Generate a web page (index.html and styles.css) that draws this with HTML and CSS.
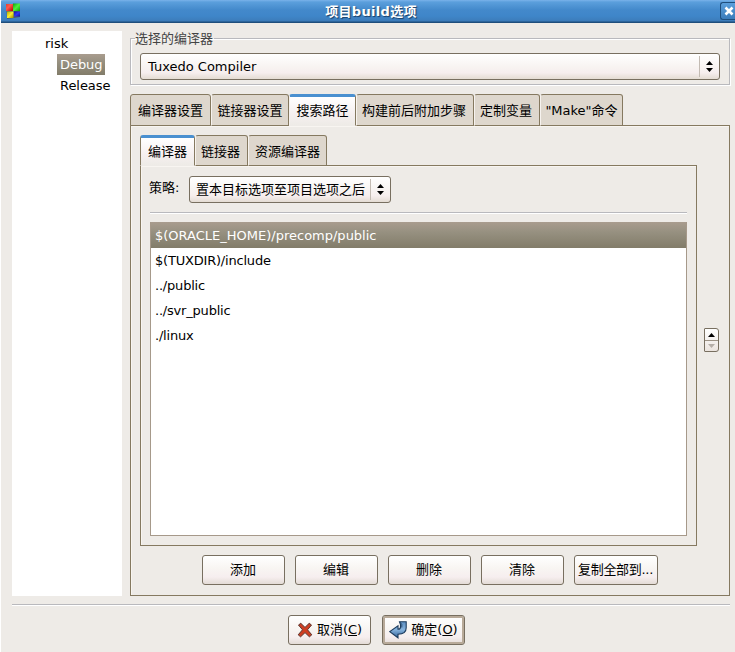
FILE: index.html
```html
<!DOCTYPE html>
<html lang="zh-CN">
<head>
<meta charset="utf-8">
<title>项目build选项</title>
<link rel="stylesheet" href="styles.css">
</head>
<body>
<div class="window">
  <header class="titlebar">
    <svg class="logo" width="16" height="16" viewBox="0 0 16 16">
      <defs>
        <linearGradient id="r" x2="1" y2="1"><stop offset="0" stop-color="#e04030"/><stop offset=".4" stop-color="#ff5a50"/><stop offset="1" stop-color="#b00000"/></linearGradient>
        <linearGradient id="g" x2="1" y2="1"><stop offset="0" stop-color="#0c9c10"/><stop offset=".5" stop-color="#50f040"/><stop offset="1" stop-color="#07a008"/></linearGradient>
        <linearGradient id="y" x2="1" y2="1"><stop offset="0" stop-color="#b8aa00"/><stop offset=".5" stop-color="#f8ec30"/><stop offset="1" stop-color="#a09000"/></linearGradient>
        <linearGradient id="b" x2="1" y2="1"><stop offset="0" stop-color="#1010a0"/><stop offset=".5" stop-color="#3038f0"/><stop offset="1" stop-color="#1010a0"/></linearGradient>
      </defs>
      <path fill="#4b3a2c" d="M1 1h14v13l-6 1-7 1z" opacity=".55"/>
      <path fill="url(#r)" d="M1 1h7v7H1z"/><path fill="url(#g)" d="M8 0.500h7V8H8z"/>
      <path fill="url(#y)" d="M2 8.500h6.500v6.500H2z"/><path fill="url(#b)" d="M9 8.500h6v5H9z"/>
    </svg>
    <h1>项目build选项</h1>
    <button class="close" aria-label="关闭"><svg width="10" height="10" viewBox="0 0 10 10"><path d="M1.5 1.5l7 7m0-7l-7 7" stroke="#fff" stroke-width="2.6"/></svg></button>
  </header>

  <div class="body">
    <nav class="tree">
      <div class="root">risk</div>
      <div class="leaf"><span class="selected">Debug</span></div>
      <div class="leaf"><span>Release</span></div>
    </nav>

    <main class="content">
      <fieldset class="group">
        <legend>选择的编译器</legend>
        <div class="combo compiler">
          <span>Tuxedo Compiler</span>
          <i><svg width="7" height="11" viewBox="0 0 7 11"><path d="M0 4L3.5 0 7 4zM0 7h7L3.5 11z"/></svg></i>
        </div>
      </fieldset>

      <div class="tabs outer">
        <div class="tab w81">编译器设置</div><div class="tab w78">链接器设置</div><div class="tab active w68">搜索路径</div><div class="tab w118">构建前后附加步骤</div><div class="tab w66">定制变量</div><div class="tab w83">"Make"命令</div>
      </div>
      <section class="panel outer-panel">
        <div class="upper">
          <div class="paths">
            <div class="tabs">
              <div class="tab active w55">编译器</div><div class="tab w53">链接器</div><div class="tab w79">资源编译器</div>
            </div>
            <section class="panel inner-panel">
              <div class="policy">
                <label>策略:</label>
                <div class="combo order">
                  <span>置本目标选项至项目选项之后</span>
                  <i><svg width="7" height="11" viewBox="0 0 7 11"><path d="M0 4L3.5 0 7 4zM0 7h7L3.5 11z"/></svg></i>
                </div>
              </div>
              <hr>
              <ul class="list">
                <li class="selected">$(ORACLE_HOME)/precomp/public</li>
                <li class="tight">$(TUXDIR)/include</li>
                <li class="tight">../public</li>
                <li class="tight">../svr_public</li>
                <li class="tight">./linux</li>
              </ul>
            </section>
          </div>
          <div class="spin">
            <div><svg width="7" height="4" viewBox="0 0 7 4"><path d="M0 4L3.5 0 7 4z"/></svg></div>
            <div><svg width="7" height="4" viewBox="0 0 7 4"><path fill="#b5aea8" d="M0 0h7L3.5 4z"/></svg></div>
          </div>
        </div>
        <div class="actions">
          <button class="btn">添加</button><button class="btn">编辑</button><button class="btn">删除</button><button class="btn">清除</button><button class="btn wide">复制全部到...</button>
        </div>
      </section>
    </main>
  </div>

  <hr class="divider">
  <footer class="footer">
    <button class="btn">
      <svg width="16" height="16" viewBox="0 0 16 16"><path d="M1.500 3L3.800 1.300 8 5.400l4.200-4.100L14.500 3l-4 4.800 4.300 5-2.400 2L8 10.600l-4.400 4.200-2.400-2 4.300-5z" fill="#cf3e22" stroke="#59332b" stroke-width="1"/></svg>
      <span>取消(<u>C</u>)</span>
    </button>
    <button class="btn default">
      <svg width="18" height="18" viewBox="0 0 18 18">
        <defs><linearGradient id="a" x2="0" y2="1"><stop offset="0" stop-color="#5d8fc2"/><stop offset=".5" stop-color="#86b2dc"/><stop offset="1" stop-color="#2f6198"/></linearGradient></defs>
        <path d="M10.500 .800h6.700v6c0 4.400-2.700 6.400-8.200 6.400v3.600L.800 10.600 9 4.800v3.500c1.500 0 2.500-.8 2.500-2.300V3.500z" fill="url(#a)" stroke="#1d3c5e" stroke-width="1.100"/>
        <path d="M11.200 1.300l1.600 2.200v3" fill="none" stroke="#1d3c5e" stroke-width=".8"/>
      </svg>
      <span>确定(<u>O</u>)</span>
    </button>
  </footer>
</div>
</body>
</html>
```
FILE: styles.css
```css
* { box-sizing: border-box; }
body {
  margin: 0;
  font: 13px/16px "DejaVu Sans", "Noto Sans CJK SC", sans-serif;
  color: #000;
  background: #eeebe7;
}
button { font: inherit; color: inherit; padding: 0; }
.window { width: 735px; height: 652px; overflow: hidden; border-left: 1px solid #fff; }
.titlebar {
  display: flex;
  align-items: center;
  height: 23px;
  margin-left: -1px;
  padding-left: 5px;
  background: linear-gradient(#7ab2ea 0, #5b9fdc 2px, #4389cb 10px, #3f86c9 16px, #3c7cba 21px, #1f4e7c 22px);
  border-radius: 3px 0 0 0;
}
.logo { margin-top: -1px; }
.titlebar h1 {
  flex: 1;
  margin: 0 0 0 1px;
  font-size: 13px;
  letter-spacing: .3px;
  line-height: 22px;
  text-align: center;
  color: #fff;
  text-shadow: 1px 1px 1px #173e66;
}
.close {
  display: flex;
  align-items: center;
  width: 15px;
  height: 18px;
  margin-top: -1px;
  padding-left: 3px;
  border: 1px solid #1f4e7c;
  border-right: 0;
  border-radius: 3px 0 0 3px;
  background: linear-gradient(#5b9fdc, #3b7cba);
}
.body { display: flex; gap: 8px; padding: 8px 5px 0 11px; }
.tree { width: 110px; height: 565px; background: #fff; padding-top: 2px; line-height: 21px; }
.root { padding-left: 33px; }
.leaf { height: 21px; padding-left: 45px; }
.leaf span { display: inline-block; height: 21px; padding: 0 2px 0 3px; letter-spacing: -.05px; }
.selected { color: #fff; background: linear-gradient(#a99c8e, #969080 40%, #827c69); }
.content { width: 600px; height: 565px; }
.group {
  display: block;
  width: 599px;
  height: 54px;
  margin: 0;
  padding: 7px 9px 0;
  border: 1px solid #b9b9bd;
  box-shadow: inset 1px 1px #fff, 1px 1px #fff;
}
.group legend { padding: 0 1px 0 0; margin-left: -5px; color: #444; height: 15px; white-space: nowrap; }
.combo {
  display: flex;
  align-items: center;
  height: 27px;
  border: 1px solid #786f60;
  border-radius: 3px;
  background: linear-gradient(#fff, #f8f4f2 50%, #f6eeee 75%, #e4dcd3);
  white-space: nowrap;
}
.combo span { flex: 1; padding-left: 6px; }
.combo i { display: flex; width: 20px; height: 21px; align-items: center; justify-content: center; border-left: 1px solid #c3bbb3; }
.compiler { width: 580px; }
.compiler span { padding-left: 7px; }
.order { width: 202px; }
.tabs { display: flex; height: 31px; position: relative; z-index: 1; }
.outer { height: 32px; margin-top: 9px; }
.tab {
  height: 100%;
  padding-top: 8px;
  text-align: center;
  white-space: nowrap;
  background: #ded7cd;
  border: 1px solid #857960;
  border-left-color: #f7f3ef;
  border-radius: 3px 3px 0 0;
}
.tab:first-child { border-left-color: #857960; }
.active {
  padding-top: 6px;
  border-top: 3px solid #4a90d0;
  border-bottom-color: #eeebe7;
  background: linear-gradient(#fff, #f6f0f0 60%, #eeebe7);
}
.w81 { width: 81px; } .w78 { width: 78px; } .w68 { width: 67px; }
.w118 { width: 118px; } .w66 { width: 66px; } .w83 { width: 83px; }
.w118, .w66, .w53 { padding-right: 2px; }
.w55 { width: 55px; } .w53 { width: 53px; } .w79 { width: 79px; }
.panel { border: 1px solid #857960; margin-top: -1px; box-shadow: inset 1px 1px #f8f5f1; }
.outer-panel { height: 471px; padding: 9px; }
.upper { display: flex; align-items: flex-start; }
.paths { width: 557px; }
.inner-panel { height: 381px; padding: 10px 9px 0; }
.policy { display: flex; }
.policy label { width: 39px; padding-top: 4px; margin-left: -1px; margin-right: 1px; white-space: nowrap; }
hr { height: 2px; margin: 9px 0 8px; border: 0; background: #b9b9bd; border-bottom: 1px solid #fff; }
.list {
  height: 314px;
  margin: 0;
  padding: 0;
  list-style: none;
  background: #fff;
  border: 1px solid #a6998a;
  border-top: 0;
}
.list li { height: 25px; padding-left: 4px; line-height: 26px; }
.list .tight { letter-spacing: -.2px; }
.list .selected { height: 26px; line-height: 27px; }
.list .selected + li { line-height: 25px; }
.spin {
  width: 15px;
  height: 24px;
  margin: 193px 0 0 7px;
  border: 1px solid #786f60;
  border-radius: 1px 3px 3px 1px;
  background: linear-gradient(#fff, #ebe4df);
}
.spin div { display: flex; height: 11px; align-items: center; justify-content: center; }
.spin div + div { border-top: 1px solid #9b9184; }
.actions { display: flex; gap: 10px; margin: 9px 0 0 62px; }
.btn {
  display: flex;
  align-items: center;
  justify-content: center;
  width: 83px;
  height: 30px;
  padding-right: 1px;
  border: 1px solid #786f60;
  border-radius: 3px;
  background: linear-gradient(#fff, #f8f5f2 45%, #f6eeef 75%, #e4dcd6);
  white-space: nowrap;
}
.wide { width: 84px; letter-spacing: -.3px; }
.divider { width: 718px; margin: 8px 0 0 11px; }
.footer { display: flex; gap: 11px; padding: 9px 0 0 287px; }
.footer .btn { gap: 4px; padding: 0; }
.footer .default { box-shadow: inset 0 0 0 2px #b8aa99; }
```
